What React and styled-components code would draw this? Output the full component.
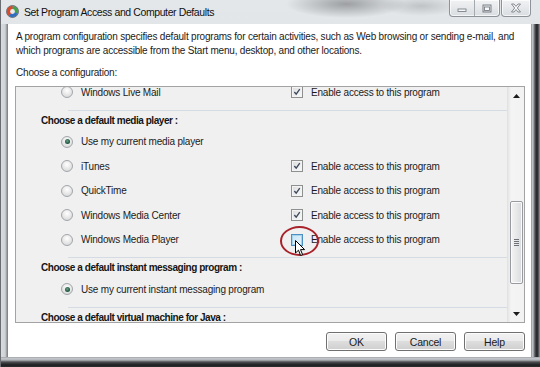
import React from 'react';
import styled, { createGlobalStyle, css } from 'styled-components';

const GlobalStyle = createGlobalStyle`
  html, body {
    margin: 0;
    padding: 0;
  }

  body {
    width: 540px;
    height: 367px;
    overflow: hidden;
    font-family: 'Liberation Sans', Arial, sans-serif;
    font-size: 10px;
    letter-spacing: -0.2px;
    color: #1b1b1b;
  }
`;

const Window = styled.div`
  position: relative;
  width: 540px;
  height: 367px;
  display: flex;
  flex-direction: column;
  box-sizing: border-box;
  border-left: 1px solid #6a6d71;
  background:
    radial-gradient(ellipse 60px 14px at 345px 4px, rgba(70, 72, 76, 0.45), transparent),
    radial-gradient(ellipse 40px 10px at 420px 6px, rgba(110, 112, 116, 0.3), transparent),
    linear-gradient(to bottom, #e4e7ea, #d3d7db);
`;

const TitleBar = styled.div`
  height: 24px;
  display: flex;
  align-items: flex-start;
  padding-left: 5px;
`;

const TitleIcon = styled.svg`
  width: 13px;
  height: 13px;
  margin-top: 5px;
  flex: none;
`;

const TitleText = styled.div`
  margin-left: 5px;
  margin-top: 4px;
  font-size: 10.5px;
  letter-spacing: -0.4px;
  color: #111;
  line-height: 16px;
`;

const CaptionButtons = styled.div`
  margin-left: auto;
  margin-right: 9px;
  display: flex;
  height: 17px;
`;

const CaptionGroup = styled.div`
  display: flex;
  border: 1px solid #8e9399;
  border-top: 0;
  border-radius: 0 0 4px 4px;
  overflow: hidden;
  background: linear-gradient(to bottom, #f1f2f4, #d9dde1);
  box-shadow: inset 0 0 0 1px rgba(255, 255, 255, 0.7);

  & + & {
    margin-left: 1px;
  }
`;

const CaptionButton = styled.div`
  width: ${({ wide }) => (wide ? 28 : 24)}px;
  display: flex;
  align-items: center;
  justify-content: center;

  & + & {
    border-left: 1px solid #a5aaaf;
  }
`;

const Middle = styled.div`
  flex: 1;
  display: flex;
  min-height: 0;
`;

const LeftFrame = styled.div`
  width: 7px;
  background: linear-gradient(to right, #d9dcdf 0, #cfd3d7 4px, #b4b8bc 5px, #8d9196 6px, #787c81 7px);
`;

const RightFrame = styled.div`
  width: 9px;
  background: linear-gradient(to right, #7b7f84 0, #c3c6ca 1px, #b8bbbf 2px, #4e5054 4px, #1f2022 6px, #3a3c3f 7px, #9a9da1 9px);
`;

const BottomFrame = styled.div`
  height: 10px;
  background: linear-gradient(to bottom, #8f9398 0, #c7cacd 1px, #b2b5b9 3px, #4b4d50 5px, #1d1e20 8px, #2e2f31 10px);
`;

const Client = styled.div`
  flex: 1;
  background: #fff;
  display: flex;
  flex-direction: column;
  padding: 6px 6px 0 8px;
  min-width: 0;
`;

const Intro = styled.p`
  margin: 0;
  line-height: 14px;
  white-space: nowrap;
`;

const ConfigLabel = styled.div`
  margin-top: 8px;
  line-height: 14px;
`;

const ListPanel = styled.div`
  margin: 6px 0 0 -1px;
  height: 237px;
  box-sizing: border-box;
  border: 1px solid #a3a3a3;
  background: #f0f0f0;
  display: flex;
  overflow: hidden;
`;

const ListView = styled.div`
  flex: 1;
  overflow: hidden;
`;

const ListContent = styled.div`
  margin-top: -7px;
`;

const Section = styled.div`
  padding-bottom: 5px;
  border-bottom: 1px solid transparent;
  position: relative;

  &::after {
    content: '';
    position: absolute;
    left: 52px;
    right: 0;
    bottom: -1px;
    height: 1px;
    background: #d5dbe2;
  }
`;

const Heading = styled.div`
  padding-left: 25px;
  height: 19px;
  line-height: 19px;
  font-weight: bold;
  letter-spacing: -0.45px;
  color: #151515;
`;

const OptionRow = styled.div`
  height: 24.5px;
  display: flex;
  align-items: center;
  padding-left: 45px;
  white-space: nowrap;
`;

const RadioLabel = styled.div`
  display: flex;
  align-items: center;
  width: 229px;
  flex: none;
`;

const Radio = styled.span`
  position: relative;
  width: 12px;
  height: 12px;
  margin-right: 8px;
  border-radius: 50%;
  border: 1px solid #a2a6aa;
  background: radial-gradient(circle at 50% 35%, #ffffff, #e6e6e6 55%, #cfd1d3);
  box-sizing: border-box;
  flex: none;

  ${({ checked }) =>
    checked &&
    css`
      &::after {
        content: '';
        position: absolute;
        left: 2.5px;
        top: 2.5px;
        width: 5px;
        height: 5px;
        border-radius: 50%;
        background: radial-gradient(circle at 45% 40%, #6fa18a, #1f5a40 60%, #183f2f);
      }
    `}
`;

const CheckLabel = styled.div`
  display: flex;
  align-items: center;
`;

const CheckBox = styled.span`
  width: 12px;
  height: 12px;
  margin: 0 8px 0 1px;
  box-sizing: border-box;
  border: 1px solid ${({ hover }) => (hover ? '#4d8fc0' : '#8e8f8f')};
  background: ${({ hover }) =>
    hover ? 'linear-gradient(135deg, #c6e4f5, #e8f5fc)' : 'linear-gradient(135deg, #dcdcdc, #fbfbfb)'};
  box-shadow: inset 0 0 0 1px ${({ hover }) => (hover ? '#a6d4ef' : '#f4f4f4')};
  display: flex;
  align-items: center;
  justify-content: center;
  flex: none;
`;

const ScrollBar = styled.div`
  width: 16px;
  flex: none;
  display: flex;
  flex-direction: column;
  align-items: center;
  background: linear-gradient(to right, #e6e6e6, #f4f4f4 3px, #f2f2f2);
  border-left: 1px solid #e2e2e2;
`;

const ArrowButton = styled.div`
  height: 17px;
  width: 100%;
  display: flex;
  align-items: center;
  justify-content: center;
`;

const Track = styled.div`
  flex: 1;
  width: 100%;
  display: flex;
  flex-direction: column;
  align-items: center;
  padding-top: 97px;
  box-sizing: border-box;
`;

const Thumb = styled.div`
  width: 13px;
  height: 83px;
  box-sizing: border-box;
  border: 1px solid #979a9e;
  border-radius: 2px;
  background: linear-gradient(to right, #f4f4f4, #e7e8e9 50%, #d9dadb);
  box-shadow: inset 0 0 0 1px #fbfbfb;
  display: flex;
  align-items: center;
  justify-content: center;
`;

const ButtonBar = styled.div`
  display: flex;
  justify-content: flex-end;
  gap: 8px;
  margin-top: 9px;
`;

const Button = styled.button`
  width: 61px;
  height: 19px;
  padding: 0;
  border: 1px solid #707070;
  border-radius: 3px;
  font-family: inherit;
  font-size: 10.5px;
  letter-spacing: -0.2px;
  color: #1b1b1b;
  background: linear-gradient(to bottom, #f2f2f2 0, #ebebeb 45%, #dddddd 50%, #cfcfcf 100%);
  box-shadow: inset 0 0 0 1px #fcfcfc;
`;

const Highlight = styled.div`
  position: absolute;
  left: 279px;
  top: 226px;
  width: 39px;
  height: 30px;
  box-sizing: border-box;
  border: 2px solid #a8222a;
  border-radius: 50%;
  pointer-events: none;
`;

const Cursor = styled.svg`
  position: absolute;
  left: 294px;
  top: 240px;
  width: 11px;
  height: 17px;
`;

const Check = () => (
  <svg width="8" height="8" viewBox="0 0 9 9">
    <path d="M1.5 4.5 L3.6 7 L7.6 1.2" fill="none" stroke="#3b4a5c" strokeWidth="1.5" />
  </svg>
);

const Option = ({ label, checked, access, hover }) => (
  <OptionRow>
    <RadioLabel>
      <Radio checked={checked} />
      {label}
    </RadioLabel>
    {access !== undefined && (
      <CheckLabel>
        <CheckBox hover={hover}>{access && <Check />}</CheckBox>
        Enable access to this program
      </CheckLabel>
    )}
  </OptionRow>
);

const App = () => (
  <>
    <GlobalStyle />
    <Window>
      <TitleBar>
        <TitleIcon viewBox="0 0 13 13">
          <circle cx="6.5" cy="6.5" r="6" fill="#8c9196" stroke="#5d6166" strokeWidth="0.8" />
          <path d="M6.5 6.5 L6.5 1 A5.5 5.5 0 0 1 11.5 8.5 Z" fill="#3fa34a" />
          <path d="M6.5 6.5 L11.5 8.5 A5.5 5.5 0 0 1 3 10.8 Z" fill="#2f6fc2" />
          <path d="M6.5 6.5 L3 10.8 A5.5 5.5 0 0 1 6.5 1 Z" fill="#d94a2c" />
          <circle cx="6.5" cy="6.5" r="2.4" fill="#e9ecef" />
        </TitleIcon>
        <TitleText>Set Program Access and Computer Defaults</TitleText>
        <CaptionButtons>
          <CaptionGroup>
            <CaptionButton>
              <svg width="10" height="8" viewBox="0 0 10 8">
                <rect x="1" y="5" width="8" height="2.5" fill="#f7f8f9" stroke="#6f747a" strokeWidth="0.8" />
              </svg>
            </CaptionButton>
            <CaptionButton>
              <svg width="10" height="9" viewBox="0 0 10 9">
                <rect x="1" y="1" width="8" height="7" fill="none" stroke="#6f747a" strokeWidth="0.9" />
                <rect x="2.5" y="3" width="5" height="3.5" fill="#f7f8f9" stroke="#6f747a" strokeWidth="0.8" />
              </svg>
            </CaptionButton>
          </CaptionGroup>
          <CaptionGroup>
            <CaptionButton wide>
              <svg width="12" height="10" viewBox="0 0 12 10">
                <path
                  d="M1.5 1 L4 1 L6 3.4 L8 1 L10.5 1 L7.3 5 L10.5 9 L8 9 L6 6.6 L4 9 L1.5 9 L4.7 5 Z"
                  fill="#f7f8f9"
                  stroke="#6f747a"
                  strokeWidth="0.8"
                />
              </svg>
            </CaptionButton>
          </CaptionGroup>
        </CaptionButtons>
      </TitleBar>
      <Middle>
        <LeftFrame />
        <Client>
          <Intro>
            A program configuration specifies default programs for certain activities, such as Web browsing or sending e-mail, and
            <br />
            which programs are accessible from the Start menu, desktop, and other locations.
          </Intro>
          <ConfigLabel>Choose a configuration:</ConfigLabel>
          <ListPanel>
            <ListView>
              <ListContent>
                <Section>
                  <Option label="Windows Live Mail" access />
                </Section>
                <Section>
                  <Heading>Choose a default media player :</Heading>
                  <Option label="Use my current media player" checked />
                  <Option label="iTunes" access />
                  <Option label="QuickTime" access />
                  <Option label="Windows Media Center" access />
                  <Option label="Windows Media Player" access={false} hover />
                </Section>
                <Section>
                  <Heading>Choose a default instant messaging program :</Heading>
                  <Option label="Use my current instant messaging program" checked />
                </Section>
                <Heading>Choose a default virtual machine for Java :</Heading>
              </ListContent>
            </ListView>
            <ScrollBar>
              <ArrowButton>
                <svg width="7" height="4" viewBox="0 0 7 4">
                  <path d="M0 4 L3.5 0 L7 4 Z" fill="#1c1c1c" />
                </svg>
              </ArrowButton>
              <Track>
                <Thumb>
                  <svg width="5" height="7" viewBox="0 0 5 7">
                    <path d="M0 0.5 H5 M0 2.5 H5 M0 4.5 H5 M0 6.5 H5" stroke="#6d7176" strokeWidth="1" />
                  </svg>
                </Thumb>
              </Track>
              <ArrowButton>
                <svg width="7" height="4" viewBox="0 0 7 4">
                  <path d="M0 0 L3.5 4 L7 0 Z" fill="#1c1c1c" />
                </svg>
              </ArrowButton>
            </ScrollBar>
          </ListPanel>
          <ButtonBar>
            <Button>OK</Button>
            <Button>Cancel</Button>
            <Button>Help</Button>
          </ButtonBar>
        </Client>
        <RightFrame />
      </Middle>
      <BottomFrame />
      <Highlight />
      <Cursor viewBox="0 0 11 17">
        <path d="M0.5 0.5 L0.5 13 L3.5 10.2 L5.6 15.5 L7.6 14.7 L5.5 9.6 L9.6 9.6 Z" fill="#fff" stroke="#000" strokeWidth="1" strokeLinejoin="round" />
      </Cursor>
    </Window>
  </>
);

export default App;
